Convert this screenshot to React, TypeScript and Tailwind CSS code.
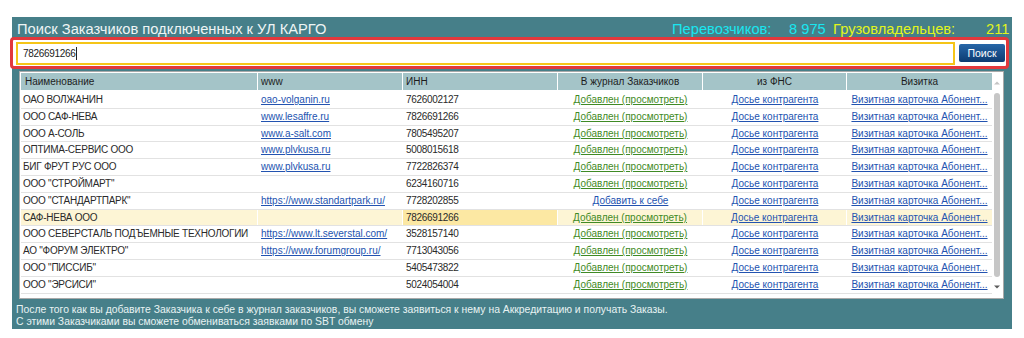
import React from "react";

type Row = {
  name: string;
  www?: string;
  inn: string;
  journal: "added" | "add";
  hl?: boolean;
};

const rows: Row[] = [
  { name: "ОАО ВОЛЖАНИН", www: "oao-volganin.ru", inn: "7626002127", journal: "added" },
  { name: "ООО САФ-НЕВА", www: "www.lesaffre.ru", inn: "7826691266", journal: "added" },
  { name: "ООО А-СОЛЬ", www: "www.a-salt.com", inn: "7805495207", journal: "added" },
  { name: "ОПТИМА-СЕРВИС ООО", www: "www.plvkusa.ru", inn: "5008015618", journal: "added" },
  { name: "БИГ ФРУТ РУС ООО", www: "www.plvkusa.ru", inn: "7722826374", journal: "added" },
  { name: "ООО \"СТРОЙМАРТ\"", inn: "6234160716", journal: "added" },
  { name: "ООО \"СТАНДАРТПАРК\"", www: "https://www.standartpark.ru/", inn: "7728202855", journal: "add" },
  { name: "САФ-НЕВА ООО", inn: "7826691266", journal: "added", hl: true },
  { name: "ООО СЕВЕРСТАЛЬ ПОДЪЕМНЫЕ ТЕХНОЛОГИИ", www: "https://www.lt.severstal.com/", inn: "3528157140", journal: "added" },
  { name: "АО \"ФОРУМ ЭЛЕКТРО\"", www: "https://www.forumgroup.ru/", inn: "7713043056", journal: "added" },
  { name: "ООО \"ПИССИБ\"", inn: "5405473822", journal: "added" },
  { name: "ООО \"ЭРСИСИ\"", inn: "5024054004", journal: "added" },
];

const cols = "grid grid-cols-[237px_145px_155px_145px_144px_145px]";

export default function App() {
  return (
    <div
      className="w-[1024px] h-[338px] bg-white pt-[17px] pl-[12px]"
      style={{ fontFamily: '"Liberation Sans", Arial, sans-serif' }}
    >
      <div className="w-[1000px] h-[312px] bg-[#467f89] flex flex-col">
        {/* title row */}
        <div className="h-[21px] flex items-end justify-between pl-[5px] pr-[4px] text-[14.7px] leading-[18px]">
          <div className="text-[#eef5f5]">Поиск Заказчиков подключенных к УЛ КАРГО</div>
          <div className="flex">
            <span className="text-[#19e6f0] w-[117px]">Перевозчиков:</span>
            <span className="text-[#19e6f0] w-[44px]">8 975</span>
            <span className="text-[#e2f51c] w-[153px]">Грузовладельцев:</span>
            <span className="text-[#e2f51c] w-[22px]">211</span>
          </div>
        </div>

        {/* search row */}
        <div className="relative mt-[2px] ml-[1px] w-[993px] h-[26px] bg-white flex items-center">
          <div className="absolute -inset-[3px] border-[3px] border-[#e2383c] rounded-[4px] pointer-events-none" />
          <div className="ml-[3px] w-[939px] h-[23px] border-2 border-[#f5c518] bg-white flex items-center pl-[5px] text-[10px] tracking-[-0.3px] text-[#222]">
            7826691266<span className="inline-block w-px h-[13px] bg-[#222]" />
          </div>
          <button className="ml-[4px] w-[46px] h-[18px] rounded-[2px] bg-gradient-to-b from-[#2767a8] to-[#0c3b72] text-white text-[10.5px] leading-[18px] text-center">
            Поиск
          </button>
        </div>

        {/* table */}
        <div className="mt-[5px] ml-[7px] w-[985px] h-[228px] border border-[#a9a9a9] bg-white p-px flex overflow-hidden">
          <div className="w-[971px] h-[224px] flex flex-col text-[10px] overflow-hidden">
            <div className={`${cols} h-[17px] text-[#1c1c1c] shrink-0`}>
              <div className="bg-[#a4c4c8] border-r border-white pl-[4px] leading-[17px]">Наименование</div>
              <div className="bg-[#a4c4c8] border-r border-white pl-[3px] leading-[17px]">www</div>
              <div className="bg-[#a4c4c8] border-r border-white pl-[3px] leading-[17px]">ИНН</div>
              <div className="bg-[#a4c4c8] border-r border-white text-center leading-[17px]">В журнал Заказчиков</div>
              <div className="bg-[#a4c4c8] border-r border-white text-center leading-[17px]">из ФНС</div>
              <div className="bg-[#a4c4c8] text-center leading-[17px]">Визитка</div>
            </div>
            <div className="mt-[2px] flex flex-col">
              {rows.map((r, i) => (
                <div
                  key={i}
                  className={`${cols} h-[16.8px] shrink-0 border-b border-[#e2e2e2] leading-[15.8px] whitespace-nowrap ${r.hl ? "bg-[#fdf5d5]" : ""}`}
                >
                  <div className={`pl-[2px] tracking-[-0.25px] text-[#2a2a2a] ${r.hl ? "border-r border-white" : ""}`}>{r.name}</div>
                  <div className={`pl-[3px] ${r.hl ? "border-r border-white" : ""}`}>
                    {r.www && <span className="text-[#2353b0] underline">{r.www}</span>}
                  </div>
                  <div className={`pl-[3px] tracking-[-0.3px] text-[#2a2a2a] ${r.hl ? "bg-[#fce8a3] border-r border-white" : ""}`}>{r.inn}</div>
                  <div className={`text-center ${r.hl ? "border-r border-white" : ""}`}>
                    {r.journal === "added" ? (
                      <span className="text-[#3f8a25] underline">Добавлен (просмотреть)</span>
                    ) : (
                      <span className="text-[#2353b0] underline">Добавить к себе</span>
                    )}
                  </div>
                  <div className={`text-center ${r.hl ? "border-r border-white" : ""}`}>
                    <span className="text-[#2353b0] underline">Досье контрагента</span>
                  </div>
                  <div className="text-center">
                    <span className="text-[#2353b0] underline">Визитная карточка Абонент...</span>
                  </div>
                </div>
              ))}
            </div>
          </div>
          {/* scrollbar */}
          <div className="w-[10px] flex flex-col items-center">
            <svg width="10" height="17" viewBox="0 0 10 17" className="mt-[2px]">
              <path d="M2 9.5 L5 6.5 L8 9.5 Z" fill="#c4c4c4" />
            </svg>
            <div className="mt-[1px] w-[6px] h-[184px] rounded-[3px] bg-[#c6c6c6]" />
            <svg width="10" height="12" viewBox="0 0 10 12" className="mt-[4px]">
              <path d="M2 4.5 L5 7.5 L8 4.5 Z" fill="#5c5c5c" />
            </svg>
          </div>
        </div>

        {/* footer */}
        <div className="mt-[5px] pl-[4px] text-[10.4px] leading-[12px] text-[#e8f3f3]">
          <div>После того как вы добавите Заказчика к себе в журнал заказчиков, вы сможете заявиться к нему на Аккредитацию и получать Заказы.</div>
          <div>С этими Заказчиками вы сможете обмениваться заявками по SBT обмену</div>
        </div>
      </div>
    </div>
  );
}
